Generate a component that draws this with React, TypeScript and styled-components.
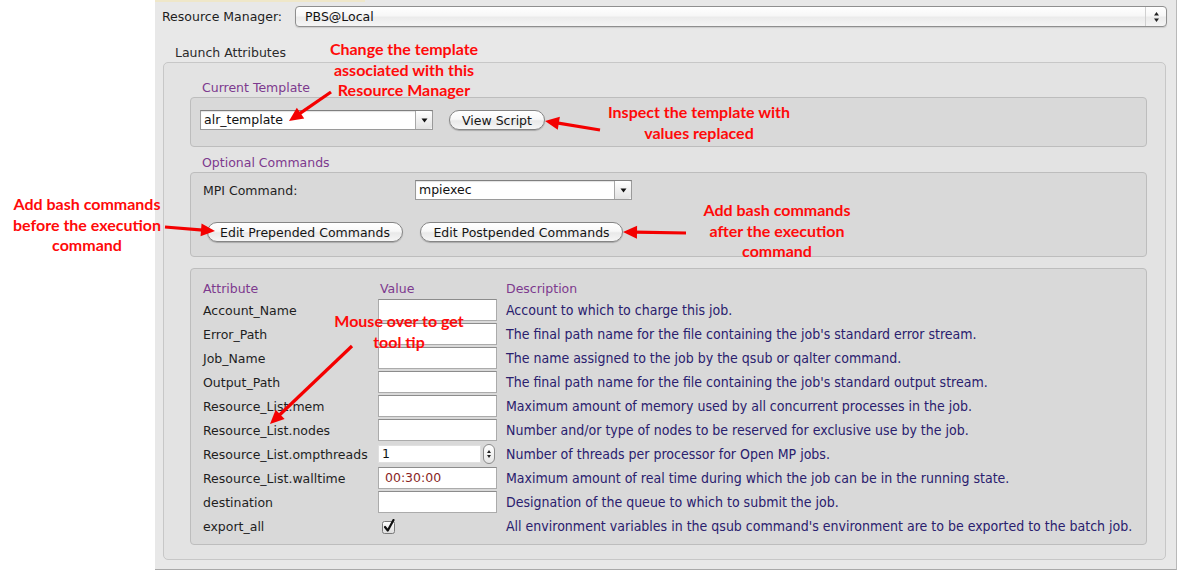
import React from 'react';
import styled, { createGlobalStyle } from 'styled-components';

const GlobalStyle = createGlobalStyle`
  html, body { margin: 0; padding: 0; background: #ffffff; }
  body { font-family: "DejaVu Sans", sans-serif; }
`;

const Page = styled.div`
  position: relative;
  width: 1181px;
  height: 574px;
  overflow: hidden;
  background: #ffffff;
`;

const Window = styled.div`
  margin-left: 155px;
  width: 1022px;
  height: 570px;
  box-sizing: border-box;
  background: #e8e8e8;
  border-right: 1px solid #b9b9b9;
  border-bottom: 1px solid #a9a9a9;
  padding: 0 9px 0 7px;
  display: flex;
  flex-direction: column;
`;

const TopEdge = styled.div`
  height: 2px;
  width: 210px;
  margin-left: -7px;
  margin-bottom: 4px;
  background: #efe7c9;
`;

const TopRow = styled.div`
  display: flex;
  align-items: center;
  height: 21px;
`;

const Label = styled.div<{ $w?: number }>`
  width: ${(p) => (p.$w ? `${p.$w}px` : 'auto')};
  flex: none;
  font-size: 12.5px;
  color: #1e1e1e;
`;

const PopupSelect = styled.div`
  flex: 1;
  height: 21px;
  box-sizing: border-box;
  display: flex;
  align-items: center;
  border: 1px solid #8f8f8f;
  border-radius: 4px;
  background: linear-gradient(#ffffff 0%, #f7f7f7 45%, #ebebeb 55%, #f5f5f5 100%);
  box-shadow: 0 1px 1px rgba(0, 0, 0, 0.12);
`;

const PopupText = styled.div`
  flex: 1;
  padding-left: 9px;
  font-size: 12.5px;
  color: #111;
`;

const PopupArrows = styled.div`
  width: 20px;
  height: 100%;
  display: flex;
  align-items: center;
  justify-content: center;
  border-left: 1px solid #d0d0d0;
`;

const GroupTitle = styled.div`
  margin-top: 18px;
  padding-left: 13px;
  height: 16px;
  line-height: 16px;
  font-size: 12.5px;
  color: #2a2a2a;
`;

const Group = styled.div`
  margin: 1px 1px 0 1px;
  height: 498px;
  box-sizing: border-box;
  border: 1px solid #c7c7c7;
  border-radius: 5px;
  background: #e3e3e3;
  padding: 17px 18px 0 26px;
  display: flex;
  flex-direction: column;
`;

const SectionLabel = styled.div<{ $top?: number }>`
  margin-top: ${(p) => p.$top ?? 0}px;
  padding-left: 12px;
  height: 16px;
  line-height: 16px;
  font-size: 12.5px;
  color: #7d3a8e;
  margin-bottom: 1px;
`;

const Box = styled.div<{ $h: number; $top?: number }>`
  height: ${(p) => p.$h}px;
  margin-top: ${(p) => p.$top ?? 0}px;
  box-sizing: border-box;
  border: 1px solid #bdbdbd;
  border-radius: 4px;
  background: #d9d9d9;
`;

const TemplateRow = styled.div`
  display: flex;
  align-items: center;
  gap: 16px;
  padding: 12px 9px 0 9px;
`;

const Combo = styled.div<{ $w: number }>`
  width: ${(p) => p.$w}px;
  height: 20px;
  box-sizing: border-box;
  display: flex;
  border: 1px solid #9a9a9a;
  border-top-color: #7f7f7f;
  background: #ffffff;
  box-shadow: inset 0 1px 1px rgba(0, 0, 0, 0.12);
`;

const ComboText = styled.div`
  flex: 1;
  padding-left: 3px;
  font-size: 12.5px;
  line-height: 18px;
  color: #111;
`;

const ComboButton = styled.div`
  width: 16px;
  border-left: 1px solid #a8a8a8;
  border-radius: 0 3px 3px 0;
  background: linear-gradient(#ffffff, #e2e2e2);
  display: flex;
  align-items: center;
  justify-content: center;
`;

const PillButton = styled.div<{ $w: number }>`
  width: ${(p) => p.$w}px;
  height: 20px;
  box-sizing: border-box;
  display: flex;
  align-items: center;
  justify-content: center;
  border: 1px solid #858585;
  border-radius: 10px;
  background: linear-gradient(#ffffff 0%, #f8f8f8 45%, #e9e9e9 55%, #f6f6f6 100%);
  box-shadow: 0 1px 1px rgba(0, 0, 0, 0.22);
  font-size: 12.5px;
  color: #151515;
  white-space: nowrap;
`;

const CommandsInner = styled.div`
  padding: 7px 12px 0 12px;
  display: flex;
  flex-direction: column;
`;

const MpiRow = styled.div`
  display: flex;
  align-items: center;
  height: 20px;
`;

const ButtonRow = styled.div`
  display: flex;
  gap: 17px;
  margin-top: 22px;
  padding-left: 4px;
`;

const Table = styled.div`
  display: grid;
  grid-template-columns: 175px 128px 1fr;
  grid-auto-rows: 24px;
  grid-template-rows: 19px;
  padding: 10px 0 0 12px;
`;

const HeadCell = styled.div<{ $pad?: number }>`
  font-size: 12.5px;
  color: #7d3a8e;
  line-height: 20px;
  padding-left: ${(p) => p.$pad ?? 0}px;
`;

const AttrCell = styled.div`
  display: flex;
  align-items: center;
  font-size: 12.5px;
  color: #1e1e1e;
  white-space: nowrap;
`;

const ValueCell = styled.div`
  display: flex;
  align-items: center;
`;

const DescCell = styled.div`
  display: flex;
  align-items: center;
  font-family: "DejaVu Sans Condensed", "DejaVu Sans", sans-serif;
  font-stretch: condensed;
  font-size: 14px;
  color: #29206e;
  white-space: nowrap;
`;

const TextField = styled.div<{ $red?: boolean }>`
  width: 119px;
  height: 22px;
  box-sizing: border-box;
  border: 1px solid #ababab;
  border-top-color: #8c8c8c;
  background: #ffffff;
  padding-left: 6px;
  font-size: 12.5px;
  line-height: 20px;
  color: ${(p) => (p.$red ? '#8a1f1f' : '#111')};
`;

const SpinWrap = styled.div`
  display: flex;
  align-items: center;
  gap: 2px;
`;

const SpinField = styled.div`
  width: 103px;
  height: 18px;
  box-sizing: border-box;
  background: #ffffff;
  border: 1px solid #e0e0e0;
  padding-left: 3px;
  font-size: 12.5px;
  line-height: 16px;
  color: #111;
`;

const SpinButton = styled.div`
  width: 12px;
  height: 20px;
  box-sizing: border-box;
  border: 1px solid #8a8a8a;
  border-radius: 6px;
  background: linear-gradient(#ffffff, #e6e6e6);
  display: flex;
  align-items: center;
  justify-content: center;
`;

const CheckWrap = styled.div`
  padding-left: 4px;
  display: flex;
  align-items: center;
`;

const Note = styled.div<{ $x: number; $y: number; $w: number }>`
  position: absolute;
  left: ${(p) => p.$x}px;
  top: ${(p) => p.$y}px;
  width: ${(p) => p.$w}px;
  text-align: center;
  font-family: Lato, "Liberation Sans", sans-serif;
  font-weight: 700;
  font-size: 16px;
  line-height: 20.5px;
  color: #ff0a0a;
  white-space: nowrap;
`;

const Overlay = styled.svg`
  position: absolute;
  left: 0;
  top: 0;
  pointer-events: none;
`;

const UpDown = () => (
  <svg width="7" height="12" viewBox="0 0 7 12">
    <path d="M3.5 1 L6 4.5 L1 4.5 Z" fill="#222" />
    <path d="M3.5 11 L6 7.5 L1 7.5 Z" fill="#222" />
  </svg>
);

const TinyUpDown = () => (
  <svg width="6" height="12" viewBox="0 0 6 12">
    <path d="M3 2 L5 5 L1 5 Z" fill="#222" />
    <path d="M3 10 L5 7 L1 7 Z" fill="#222" />
  </svg>
);

const DownTri = () => (
  <svg width="7" height="5" viewBox="0 0 7 5">
    <path d="M0.5 0.5 L6.5 0.5 L3.5 4.5 Z" fill="#111" />
  </svg>
);

const CheckBox = () => (
  <svg width="15" height="15" viewBox="0 0 15 15">
    <defs>
      <linearGradient id="cbg" x1="0" y1="0" x2="0" y2="1">
        <stop offset="0" stopColor="#ffffff" />
        <stop offset="1" stopColor="#dcdcdc" />
      </linearGradient>
    </defs>
    <rect x="0.5" y="2.5" width="12" height="12" rx="2" fill="url(#cbg)" stroke="#7a7a7a" />
    <path d="M3 8 L5.8 11.5 L11.5 1" fill="none" stroke="#111" strokeWidth="2.2" strokeLinecap="round" strokeLinejoin="round" />
  </svg>
);

type Arrow = [number, number, number, number];

const arrows: Arrow[] = [
  [331, 92, 289, 121],
  [600, 130, 545, 121],
  [165, 227, 215, 231],
  [686, 233, 623, 232],
  [352, 346, 270, 424],
];

const ArrowShape = ({ a }: { a: Arrow }) => {
  const [x1, y1, x2, y2] = a;
  const dx = x2 - x1;
  const dy = y2 - y1;
  const len = Math.hypot(dx, dy);
  const ux = dx / len;
  const uy = dy / len;
  const hl = 14;
  const hw = 6.5;
  const bx = x2 - ux * hl;
  const by = y2 - uy * hl;
  const p1 = `${bx - uy * hw},${by + ux * hw}`;
  const p2 = `${bx + uy * hw},${by - ux * hw}`;
  return (
    <g>
      <line x1={x1} y1={y1} x2={bx + ux * 2} y2={by + uy * 2} stroke="#f40000" strokeWidth="3.2" />
      <polygon points={`${x2},${y2} ${p1} ${p2}`} fill="#f40000" />
    </g>
  );
};

type Row = { attr: string; desc: string; kind?: 'spin' | 'red' | 'check'; value?: string };

const rows: Row[] = [
  { attr: 'Account_Name', desc: 'Account to which to charge this job.' },
  { attr: 'Error_Path', desc: "The final path name for the file containing the job's standard error stream." },
  { attr: 'Job_Name', desc: 'The name assigned to the job by the qsub or qalter command.' },
  { attr: 'Output_Path', desc: "The final path name for the file containing the job's standard output stream." },
  { attr: 'Resource_List.mem', desc: 'Maximum amount of memory used by all concurrent processes in the job.' },
  { attr: 'Resource_List.nodes', desc: 'Number and/or type of nodes to be reserved for exclusive use by the job.' },
  { attr: 'Resource_List.ompthreads', desc: 'Number of threads per processor for Open MP jobs.', kind: 'spin', value: '1' },
  { attr: 'Resource_List.walltime', desc: 'Maximum amount of real time during which the job can be in the running state.', kind: 'red', value: '00:30:00' },
  { attr: 'destination', desc: 'Designation of the queue to which to submit the job.' },
  { attr: 'export_all', desc: "All environment variables in the qsub command's environment are to be exported to the batch job.", kind: 'check' },
];

const renderValue = (r: Row) => {
  if (r.kind === 'spin') {
    return (
      <SpinWrap>
        <SpinField>{r.value}</SpinField>
        <SpinButton>
          <TinyUpDown />
        </SpinButton>
      </SpinWrap>
    );
  }
  if (r.kind === 'check') {
    return (
      <CheckWrap>
        <CheckBox />
      </CheckWrap>
    );
  }
  return <TextField $red={r.kind === 'red'}>{r.value ?? ''}</TextField>;
};

export default function App() {
  return (
    <Page>
      <GlobalStyle />
      <Window>
        <TopEdge />
        <TopRow>
          <Label $w={133}>Resource Manager:</Label>
          <PopupSelect>
            <PopupText>PBS@Local</PopupText>
            <PopupArrows>
              <UpDown />
            </PopupArrows>
          </PopupSelect>
        </TopRow>
        <GroupTitle>Launch Attributes</GroupTitle>
        <Group>
          <SectionLabel>Current Template</SectionLabel>
          <Box $h={50}>
            <TemplateRow>
              <Combo $w={233}>
                <ComboText>alr_template</ComboText>
                <ComboButton>
                  <DownTri />
                </ComboButton>
              </Combo>
              <PillButton $w={96}>View Script</PillButton>
            </TemplateRow>
          </Box>
          <SectionLabel $top={8}>Optional Commands</SectionLabel>
          <Box $h={85}>
            <CommandsInner>
              <MpiRow>
                <Label $w={212}>MPI Command:</Label>
                <Combo $w={217}>
                  <ComboText>mpiexec</ComboText>
                  <ComboButton>
                    <DownTri />
                  </ComboButton>
                </Combo>
              </MpiRow>
              <ButtonRow>
                <PillButton $w={196}>Edit Prepended Commands</PillButton>
                <PillButton $w={203}>Edit Postpended Commands</PillButton>
              </ButtonRow>
            </CommandsInner>
          </Box>
          <Box $h={277} $top={11}>
            <Table>
              <HeadCell>Attribute</HeadCell>
              <HeadCell $pad={2}>Value</HeadCell>
              <HeadCell>Description</HeadCell>
              {rows.map((r) => (
                <React.Fragment key={r.attr}>
                  <AttrCell>{r.attr}</AttrCell>
                  <ValueCell>{renderValue(r)}</ValueCell>
                  <DescCell>{r.desc}</DescCell>
                </React.Fragment>
              ))}
            </Table>
          </Box>
        </Group>
      </Window>

      <Note $x={314} $y={39} $w={180}>
        Change the template
        <br />
        associated with this
        <br />
        Resource Manager
      </Note>
      <Note $x={589} $y={102} $w={220}>
        Inspect the template with
        <br />
        values replaced
      </Note>
      <Note $x={2} $y={194} $w={170}>
        Add bash commands
        <br />
        before the execution
        <br />
        command
      </Note>
      <Note $x={692} $y={200} $w={170}>
        Add bash commands
        <br />
        after the execution
        <br />
        command
      </Note>
      <Note $x={324} $y={311} $w={150}>
        Mouse over to get
        <br />
        tool tip
      </Note>

      <Overlay width="1181" height="574" viewBox="0 0 1181 574">
        {arrows.map((a, i) => (
          <ArrowShape key={i} a={a} />
        ))}
      </Overlay>
    </Page>
  );
}
